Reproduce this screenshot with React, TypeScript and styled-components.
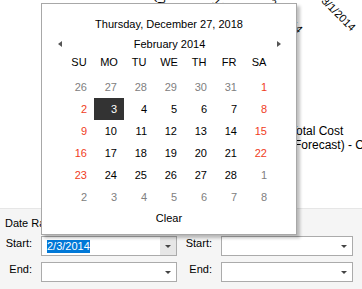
import React from "react";
import styled, { createGlobalStyle } from "styled-components";

const GlobalStyle = createGlobalStyle`
  html, body {
    margin: 0;
    padding: 0;
    background: #ffffff;
  }
  body {
    font-family: "Liberation Sans", Arial, sans-serif;
    font-size: 11px;
    color: #000000;
  }
`;

const Screen = styled.div`
  position: relative;
  width: 362px;
  height: 289px;
  overflow: hidden;
  display: flex;
  flex-direction: column;
  background: #ffffff;
`;

/* chart behind the popup */
const ChartArea = styled.div`
  position: relative;
  flex: none;
  height: 208px;
`;

const AxisLabel = styled.span<{ $x: number; $y: number }>`
  position: absolute;
  right: ${(p) => 362 - p.$x}px;
  top: ${(p) => p.$y - 6}px;
  line-height: 12px;
  font-size: 11px;
  white-space: nowrap;
  transform-origin: 100% 50%;
  transform: rotate(45deg);
`;

const Legend = styled.div`
  position: absolute;
  left: 290px;
  top: 124px;
  font-size: 12px;
  line-height: 14px;
  white-space: nowrap;
`;

/* filter panel */
const FilterPanel = styled.div`
  flex: 1;
  background: #f5f5f5;
  border-top: 1px solid #e6e6e6;
  padding-top: 7px;
`;

const PanelTitle = styled.div`
  padding-left: 5px;
  line-height: 14px;
  white-space: nowrap;
`;

const FieldGrid = styled.div`
  display: grid;
  grid-template-columns: 41px 136px 44px 132px;
  row-gap: 6px;
  margin-top: 6px;
`;

const FieldLabel = styled.div`
  align-self: start;
  text-align: right;
  padding-right: 9px;
  line-height: 14px;
`;

const ComboBox = styled.div`
  display: flex;
  height: 20px;
  box-sizing: border-box;
  border: 1px solid #ababab;
  background: #ffffff;
`;

const ComboValue = styled.div`
  flex: 1;
  display: flex;
  align-items: center;
  padding-left: 5px;
`;

const SelectedText = styled.span`
  background: #0078d7;
  color: #ffffff;
  line-height: 13px;
`;

const DropButton = styled.div<{ $hot?: boolean }>`
  width: 16px;
  display: flex;
  align-items: center;
  justify-content: center;
  background: ${(p) => (p.$hot ? "#e6e6e6" : "transparent")};
`;

const DropArrow = styled.span`
  width: 0;
  height: 0;
  margin-top: 1px;
  border-left: 3px solid transparent;
  border-right: 3px solid transparent;
  border-top: 3px solid #444444;
`;

/* calendar popup */
const Popup = styled.div`
  position: absolute;
  left: 41px;
  top: 3px;
  width: 256px;
  height: 232px;
  box-sizing: border-box;
  border: 1px solid #a8a8a8;
  background: #ffffff;
  box-shadow: 3px 3px 3px rgba(0, 0, 0, 0.25);
  padding: 9px 0 5px;
  display: flex;
  flex-direction: column;
`;

const TodayTitle = styled.div`
  line-height: 22px;
  text-align: center;
`;

const NavRow = styled.div`
  height: 18px;
  display: flex;
  align-items: center;
  justify-content: space-between;
  padding: 0 15px 0 16px;
`;

const NavArrow = styled.span<{ $dir: "left" | "right" }>`
  width: 0;
  height: 0;
  border-top: 3.5px solid transparent;
  border-bottom: 3.5px solid transparent;
  ${(p) =>
    p.$dir === "left"
      ? "border-right: 4px solid #555555;"
      : "border-left: 4px solid #555555;"}
`;

const MonthTitle = styled.span``;

const WeekGrid = styled.div`
  display: grid;
  grid-template-columns: repeat(7, 30px);
  width: 210px;
  margin: 0 auto;
`;

const WeekDay = styled.div`
  line-height: 18px;
  text-align: center;
`;

const DaysGrid = styled(WeekGrid)`
  grid-auto-rows: 22px;
  margin-top: 5px;
`;

type DayKind = "normal" | "weekend" | "other";

const DayCell = styled.div<{ $kind: DayKind; $selected?: boolean }>`
  line-height: 22px;
  text-align: right;
  padding-right: 7px;
  color: ${(p) =>
    p.$selected
      ? "#ffffff"
      : p.$kind === "weekend"
      ? "#f03c1c"
      : p.$kind === "other"
      ? "#808080"
      : "#000000"};
  background: ${(p) => (p.$selected ? "#333333" : "transparent")};
`;

const ClearButton = styled.div`
  line-height: 20px;
  text-align: center;
`;

const weekDays = ["SU", "MO", "TU", "WE", "TH", "FR", "SA"];

type Day = { n: number; kind: DayKind; selected?: boolean };

const buildDays = (): Day[] => {
  const days: Day[] = [];
  for (let n = 26; n <= 31; n++) days.push({ n, kind: "other" });
  for (let n = 1; n <= 28; n++) {
    const col = days.length % 7;
    days.push({ n, kind: col === 0 || col === 6 ? "weekend" : "normal", selected: n === 3 });
  }
  for (let n = 1; days.length < 42; n++) days.push({ n, kind: "other" });
  return days;
};

const axisLabels = [
  { text: "12/1/2013", x: 190, y: 30 },
  { text: "1/1/2014", x: 245, y: 30 },
  { text: "2/1/2014", x: 301, y: 31 },
  { text: "3/1/2014", x: 354, y: 29 },
];

const App: React.FC = () => {
  const days = buildDays();

  return (
    <Screen>
      <GlobalStyle />
      <ChartArea>
        {axisLabels.map((l) => (
          <AxisLabel key={l.text} $x={l.x} $y={l.y}>
            {l.text}
          </AxisLabel>
        ))}
        <Legend>
          Total Cost
          <br />
          (Forecast) - Cumulative
        </Legend>
      </ChartArea>

      <FilterPanel>
        <PanelTitle>Date Range</PanelTitle>
        <FieldGrid>
          <FieldLabel>Start:</FieldLabel>
          <ComboBox>
            <ComboValue>
              <SelectedText>2/3/2014</SelectedText>
            </ComboValue>
            <DropButton $hot>
              <DropArrow />
            </DropButton>
          </ComboBox>
          <FieldLabel>Start:</FieldLabel>
          <ComboBox>
            <ComboValue />
            <DropButton>
              <DropArrow />
            </DropButton>
          </ComboBox>

          <FieldLabel>End:</FieldLabel>
          <ComboBox>
            <ComboValue />
            <DropButton>
              <DropArrow />
            </DropButton>
          </ComboBox>
          <FieldLabel>End:</FieldLabel>
          <ComboBox>
            <ComboValue />
            <DropButton>
              <DropArrow />
            </DropButton>
          </ComboBox>
        </FieldGrid>
      </FilterPanel>

      <Popup>
        <TodayTitle>Thursday, December 27, 2018</TodayTitle>
        <NavRow>
          <NavArrow $dir="left" />
          <MonthTitle>February 2014</MonthTitle>
          <NavArrow $dir="right" />
        </NavRow>
        <WeekGrid>
          {weekDays.map((d) => (
            <WeekDay key={d}>{d}</WeekDay>
          ))}
        </WeekGrid>
        <DaysGrid>
          {days.map((d, i) => (
            <DayCell key={i} $kind={d.kind} $selected={d.selected}>
              {d.n}
            </DayCell>
          ))}
        </DaysGrid>
        <ClearButton>Clear</ClearButton>
      </Popup>
    </Screen>
  );
};

export default App;
